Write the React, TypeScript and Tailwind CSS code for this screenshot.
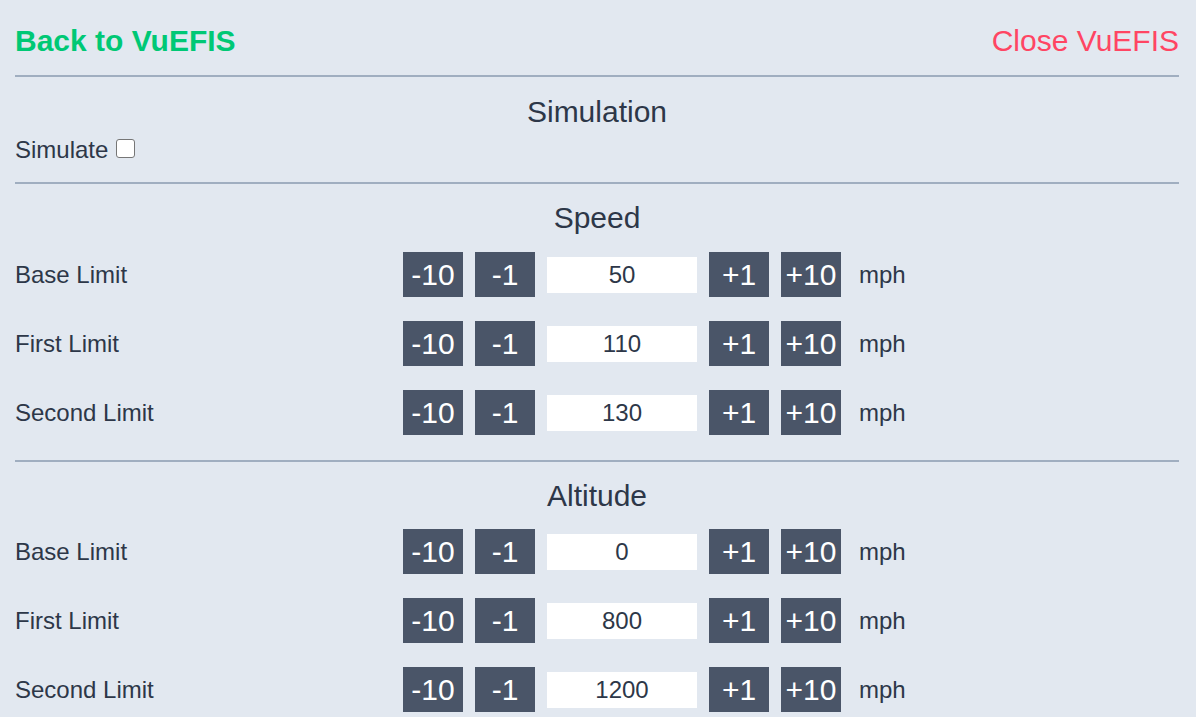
import React from "react";

const Row = ({ label, value }: { label: string; value: string }) => (
  <div className="flex items-center h-[45px]">
    <div className="w-[388px] text-[24px] leading-[28px] text-[#2d3748]">{label}</div>
    <div className="flex items-center gap-[12px]">
      <button className="w-[60px] h-[45px] bg-[#4a5568] text-white text-[30px] leading-[45px]">-10</button>
      <button className="w-[60px] h-[45px] bg-[#4a5568] text-white text-[30px] leading-[45px]">-1</button>
      <div className="w-[150px] h-[36px] bg-white text-center text-[24px] leading-[36px] text-[#2d3748]">{value}</div>
      <button className="w-[60px] h-[45px] bg-[#4a5568] text-white text-[30px] leading-[45px]">+1</button>
      <button className="w-[60px] h-[45px] bg-[#4a5568] text-white text-[30px] leading-[45px]">+10</button>
      <span className="ml-[6px] text-[24px] leading-[28px] text-[#2d3748]">mph</span>
    </div>
  </div>
);

export default function App() {
  return (
    <div
      className="min-h-[717px] bg-[#e2e8f0] pl-[15px] pr-[17px] pt-[23px] text-[#2d3748]"
      style={{ fontFamily: '"Liberation Sans", Arial, sans-serif' }}
    >
      <div className="flex justify-between items-center h-[36px]">
        <span className="text-[30px] leading-[36px] font-bold text-[#00c875]">Back to VuEFIS</span>
        <span className="text-[30px] leading-[36px] text-[#ff4563]">Close VuEFIS</span>
      </div>
      <div className="mt-[16px] h-[2px] bg-[#a0aec0]" />
      <div className="mt-[17px] text-center text-[30px] leading-[36px]">Simulation</div>
      <div className="mt-[6px] flex items-center h-[28px] text-[24px] leading-[28px]">
        <span>Simulate</span>
        <span className="ml-[8px] -mt-[3px] inline-block w-[19px] h-[19px] rounded-[3px] border border-[#767676] bg-white" />
      </div>
      <div className="mt-[18px] h-[2px] bg-[#a0aec0]" />
      <div className="mt-[16px] text-center text-[30px] leading-[36px]">Speed</div>
      <div className="mt-[16px] flex flex-col gap-[24px]">
        <Row label="Base Limit" value="50" />
        <Row label="First Limit" value="110" />
        <Row label="Second Limit" value="130" />
      </div>
      <div className="mt-[25px] h-[2px] bg-[#a0aec0]" />
      <div className="mt-[16px] text-center text-[30px] leading-[36px]">Altitude</div>
      <div className="mt-[15px] flex flex-col gap-[24px]">
        <Row label="Base Limit" value="0" />
        <Row label="First Limit" value="800" />
        <Row label="Second Limit" value="1200" />
      </div>
    </div>
  );
}
